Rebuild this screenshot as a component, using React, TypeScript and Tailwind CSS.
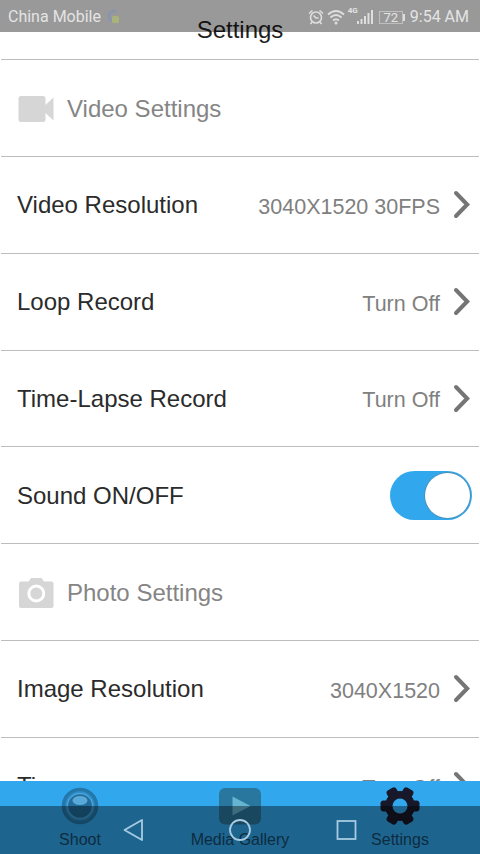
import { useState, type ReactNode } from "react";

function Chevron() {
  return (
    <svg viewBox="0 0 20 32" className="h-8 w-5 shrink-0" fill="none">
      <path
        d="M5 4 16.200 15.500 5 27"
        stroke="#757575"
        strokeWidth="4"
        strokeLinecap="round"
        strokeLinejoin="miter"
      />
    </svg>
  );
}

function VideoIcon() {
  return (
    <svg viewBox="0 0 36 32" className="h-8 w-9" fill="#d6d6d6">
      <path d="M3 3h22a2.500 2.500 0 0 1 2.500 2.500v6.500l8-7.500v23l-8-7.500v6.500a2.500 2.500 0 0 1-2.500 2.500H3a2.500 2.500 0 0 1-2.500-2.500v-21A2.500 2.500 0 0 1 3 3z" />
    </svg>
  );
}

function CameraIcon() {
  return (
    <svg viewBox="0 0 36 32" className="h-8 w-9" fill="#d6d6d6">
      <path d="M3 4.500h7.500L13 1h10.500l2.500 3.500h7.500A2 2 0 0 1 35.500 6.500v22.500a2 2 0 0 1-2 2H3a2 2 0 0 1-2-2V6.500a2 2 0 0 1 2-2z" />
      <circle cx="18.300" cy="16.500" r="7.500" fill="none" stroke="#fff" strokeWidth="3" />
    </svg>
  );
}

function Row({ label, children }: { label: string; children: ReactNode }) {
  return (
    <div className="mx-px flex h-[96.8px] shrink-0 items-center justify-between border-b border-[#bdbdbd] pl-4 pr-2 pt-px">
      <span className="text-2xl text-[#2b2b2b]">{label}</span>
      {children}
    </div>
  );
}

function ValueRow({ label, value }: { label: string; value: string }) {
  return (
    <Row label={label}>
      <div className="flex items-center gap-[11px]">
        <span className="pt-[3px] text-[21.5px] text-[#808080]">{value}</span>
        <Chevron />
      </div>
    </Row>
  );
}

function SectionRow({ label, icon }: { label: string; icon: ReactNode }) {
  return (
    <div className="mx-px flex h-[96.8px] shrink-0 items-center gap-[13px] border-b border-[#bdbdbd] pl-[17px] pt-px">
      {icon}
      <span className="text-2xl text-[#858585]">{label}</span>
    </div>
  );
}

function StatusBar() {
  return (
    <div className="absolute inset-x-0 top-0 flex h-8 items-center bg-black/40 pl-2 pr-[11px] pt-0.5 font-['Roboto',sans-serif] text-[16px] text-[#e4e4e4]">
      <span>China Mobile</span>
      <svg viewBox="0 0 16 18" className="ml-1 h-[18px] w-4" fill="none">
        <path d="M11 3.500A5 5 0 1 0 7 13" stroke="#8895ac" strokeWidth="3" />
        <rect x="7" y="8" width="7" height="7" rx="1.500" fill="#a9b278" />
      </svg>
      <div className="ml-auto flex items-center">
        <svg viewBox="0 0 16 16" className="size-4" fill="none" stroke="#dedede" strokeWidth="1.600">
          <circle cx="8" cy="8.500" r="5.500" />
          <path d="M1 4.500 4.500 1.500M11.500 1.500 15 4.500M4 13l-1.500 2M12 13l1.500 2M5.500 6.500 8 9h2.500" />
        </svg>
        <svg viewBox="0 0 18 16" className="ml-[3px] h-4 w-[18px]" fill="none" stroke="#dedede" strokeWidth="2">
          <path d="M1 5.500Q9-1.500 17 5.500M3.500 8.500Q9 3.500 14.500 8.500M6 11.500Q9 9 12 11.500" />
          <circle cx="9" cy="14" r="1.500" fill="#dedede" stroke="none" />
        </svg>
        <span className="ml-[3px] self-start pt-px text-[8px] font-bold leading-[10px]">4G</span>
        <svg viewBox="0 0 16 16" className="-ml-px h-4 w-4" fill="#dedede">
          <path d="M0 12h2v3H0zM3.500 10h2v5h-2zM7 7h2v8H7zM10.500 4h2v11h-2zM14 1h2v14h-2z" />
        </svg>
        <span className="ml-1.5 flex h-[13px] w-6 items-center justify-center border border-[#bfbfbf] text-[13px] leading-none">
          72
        </span>
        <span className="mr-[5px] h-[7px] w-0.5 bg-[#dedede]" />
        <span>9:54 AM</span>
      </div>
    </div>
  );
}

function NavBar() {
  return (
    <div className="absolute inset-x-0 bottom-0 h-12 bg-black/40">
      <svg viewBox="0 0 480 48" className="h-12 w-[480px]" fill="none" stroke="#a8cbe2" strokeWidth="1.800">
        <path d="M124.500 24 142 14v20z" strokeLinejoin="round" />
        <circle cx="240" cy="24" r="10" />
        <rect x="337.500" y="15" width="18" height="18" />
      </svg>
    </div>
  );
}

function TabItem({ label, children }: { label: string; children: ReactNode }) {
  return (
    <div className="flex w-40 flex-col items-center pt-[5px]">
      <svg viewBox="0 0 44 40" className="h-10 w-11">
        {children}
      </svg>
      <span className="mt-1 text-base leading-5 text-[#184a6c]">{label}</span>
    </div>
  );
}

export default function App() {
  const [sound, setSound] = useState(true);

  return (
    <div className="relative flex h-[854px] w-[480px] flex-col overflow-hidden bg-white font-['Liberation_Sans',Arial,sans-serif]">
      <header className="mx-px flex h-[60.3px] shrink-0 items-center justify-center border-b border-[#bdbdbd] pt-px text-2xl text-[#1f1f1f]">
        Settings
      </header>
      <main className="flex min-h-0 flex-1 flex-col overflow-hidden">
        <SectionRow label="Video Settings" icon={<VideoIcon />} />
        <ValueRow label="Video Resolution" value="3040X1520 30FPS" />
        <ValueRow label="Loop Record" value="Turn Off" />
        <ValueRow label="Time-Lapse Record" value="Turn Off" />
        <Row label="Sound ON/OFF">
          <button
            type="button"
            role="switch"
            aria-checked={sound}
            aria-label="Sound"
            onClick={() => setSound(!sound)}
            className={`-mr-px flex h-[49px] w-[82px] items-center rounded-full p-0.5 ${sound ? "justify-end bg-[#31a8ee]" : "justify-start bg-gray-300"}`}
          >
            <span className="size-[45px] rounded-full bg-white ring-1 ring-[#4893bd]" />
          </button>
        </Row>
        <SectionRow label="Photo Settings" icon={<CameraIcon />} />
        <ValueRow label="Image Resolution" value="3040X1520" />
        <ValueRow label="Timer" value="Turn Off" />
      </main>
      <footer className="flex h-[73.5px] shrink-0 bg-[#31a8ee]">
        <TabItem label="Shoot">
          <circle cx="22" cy="20" r="16.500" fill="#2b8fcb" stroke="#2478a9" strokeWidth="3.500" />
          <circle cx="22" cy="20" r="12.500" fill="#216d9c" stroke="#4fa3d6" strokeWidth="1.300" />
          <ellipse cx="22" cy="14.500" rx="7.500" ry="4.500" fill="#58a9d8" />
        </TabItem>
        <TabItem label="Media Gallery">
          <rect x="1" y="2" width="42" height="36.500" rx="6" fill="#29779f" />
          <path d="M14.500 10.500v19l18-9.500z" fill="#65b4d0" />
        </TabItem>
        <TabItem label="Settings">
          {/* ring plus three bars crossing it, which leave six teeth */}
          <mask id="gear-hole">
            <rect width="44" height="40" fill="#fff" />
            <circle cx="22" cy="20" r="7.500" fill="#000" />
          </mask>
          <g fill="#18182b" mask="url(#gear-hole)">
            <circle cx="22" cy="20" r="15" />
            <rect x="2.500" y="14.500" width="39" height="11" rx="3" />
            <rect x="2.500" y="14.500" width="39" height="11" rx="3" transform="rotate(60 22 20)" />
            <rect x="2.500" y="14.500" width="39" height="11" rx="3" transform="rotate(-60 22 20)" />
          </g>
        </TabItem>
      </footer>
      <StatusBar />
      <NavBar />
    </div>
  );
}
